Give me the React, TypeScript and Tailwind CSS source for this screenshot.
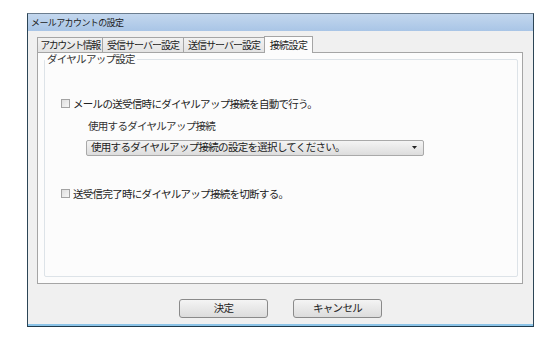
import React from 'react';

const font = { fontFamily: '"Noto Sans CJK JP", "Noto Sans", sans-serif' };

const tabs = [
  { label: 'アカウント情報', cls: 'w-[66px] tracking-[-1.5px]' },
  { label: '受信サーバー設定', cls: 'w-[82px] -ml-px tracking-[-1px]' },
  { label: '送信サーバー設定', cls: 'w-[82px] -ml-px tracking-[-1px]' },
];

function CheckBox() {
  return (
    <span className="inline-block w-[9px] h-[9px] border border-[#a3a3a3] bg-gradient-to-br from-[#dedede] to-[#f6f6f6] mr-[3px] shrink-0" />
  );
}

export default function App() {
  return (
    <div className="w-[555px] h-[351px] bg-white pt-[13px] pl-[27px] leading-none" style={font}>
      <div className="w-[507px] h-[314px] border border-t-[#6b7d8f] border-x-[#2c4556] border-b-[#1f3a4c] flex flex-col bg-[#f0f0f0] shadow-[inset_0_-2px_0_#8cc4e8]">
        {/* title bar */}
        <div className="h-[17px] bg-gradient-to-b from-[#c3d7ee] to-[#a9c5e6] flex items-center pl-[3px] text-[9px] text-[#1b1b1b] tracking-[-0.6px]">
          メールアカウントの設定
        </div>

        <div className="flex-1 flex flex-col px-[9px] pt-[4px]">
          {/* tabs */}
          <div className="flex items-end h-[17px] relative z-10 text-[10px] text-[#222] whitespace-nowrap">
            {tabs.map((t) => (
              <div
                key={t.label}
                className={`h-[15px] border border-b-0 border-[#a5a5a5] bg-gradient-to-b from-[#f2f2f2] to-[#e3e3e3] flex items-center justify-center ${t.cls}`}
              >
                {t.label}
              </div>
            ))}
            <div className="w-[49px] h-[17px] -ml-px mb-[-1px] border border-b-0 border-[#a5a5a5] bg-[#fcfcfc] flex items-center justify-center tracking-[-0.6px]">
              接続設定
            </div>
          </div>

          {/* panel */}
          <div className="w-[486px] h-[232px] border border-[#a5a5a5] bg-[#fcfcfc] pl-[6px] pr-[4px] pt-[1px] pb-[6px] flex">
            <fieldset className="flex-1 border border-[#dde3e8] rounded-[2px] px-0 text-[10.5px] tracking-[-0.7px] text-[#222]">
              <legend className="ml-0 px-[2px] text-[#333]">ダイヤルアップ設定</legend>
              <div className="pl-[16px] pt-[34px]">
                <div className="flex items-center">
                  <CheckBox />
                  <span>メールの送受信時にダイヤルアップ接続を自動で行う。</span>
                </div>
                <div className="pl-[27px] pt-[12px] text-[#333]">使用するダイヤルアップ接続</div>
                <div className="ml-[25px] mt-[8px] w-[338px] h-[16px] border border-[#a9a9a9] rounded-[2px] bg-gradient-to-b from-[#f4f4f4] to-[#dddddd] flex items-center justify-between pl-[4px] pr-[6px]">
                  <span>使用するダイヤルアップ接続の設定を選択してください。</span>
                  <svg width="5" height="3" viewBox="0 0 5 3">
                    <path d="M0 0H5L2.5 3Z" fill="#222" />
                  </svg>
                </div>
                <div className="flex items-center mt-[33px]">
                  <CheckBox />
                  <span>送受信完了時にダイヤルアップ接続を切断する。</span>
                </div>
              </div>
            </fieldset>
          </div>

          {/* buttons */}
          <div className="flex justify-center gap-[25px] mt-[15px] text-[10.5px] tracking-[-0.7px] text-[#222]">
            <button className="w-[89px] h-[19px] border border-[#8a8a8a] rounded-[3px] bg-gradient-to-b from-[#f4f4f4] to-[#dcdcdc]">
              決定
            </button>
            <button className="w-[89px] h-[19px] border border-[#8a8a8a] rounded-[3px] bg-gradient-to-b from-[#f4f4f4] to-[#dcdcdc]">
              キャンセル
            </button>
          </div>
        </div>
      </div>
    </div>
  );
}
